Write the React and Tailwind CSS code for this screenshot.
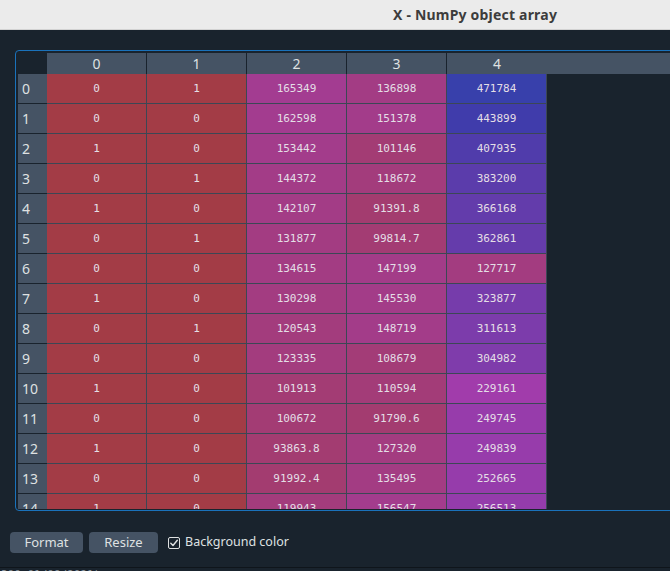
import React from "react";

const rows = [
  ["0", "1", "165349", "136898", "471784"],
  ["0", "0", "162598", "151378", "443899"],
  ["1", "0", "153442", "101146", "407935"],
  ["0", "1", "144372", "118672", "383200"],
  ["1", "0", "142107", "91391.8", "366168"],
  ["0", "1", "131877", "99814.7", "362861"],
  ["0", "0", "134615", "147199", "127717"],
  ["1", "0", "130298", "145530", "323877"],
  ["0", "1", "120543", "148719", "311613"],
  ["0", "0", "123335", "108679", "304982"],
  ["1", "0", "101913", "110594", "229161"],
  ["0", "0", "100672", "91790.6", "249745"],
  ["1", "0", "93863.8", "127320", "249839"],
  ["0", "0", "91992.4", "135495", "252665"],
  ["1", "0", "119943", "156547", "256513"],
];

const VMAX = 471784.1;
const VMIN = 0;

function hsvToRgb(h, s, v) {
  const i = Math.floor(h * 6) % 6;
  const f = h * 6 - Math.floor(h * 6);
  const p = v * (1 - s);
  const q = v * (1 - f * s);
  const t = v * (1 - (1 - f) * s);
  const m = [
    [v, t, p],
    [q, v, p],
    [p, v, t],
    [p, q, v],
    [t, p, v],
    [v, p, q],
  ][i];
  return m.map((x) => x * 255);
}

function cellColor(str) {
  const val = parseFloat(str);
  const hue = 0.66 + 0.33 * (VMAX - val) / (VMAX - VMIN);
  const [r, g, b] = hsvToRgb(hue, 0.7, 1);
  const bg = [25, 35, 45];
  const a = 0.6;
  const mix = (c, k) => Math.round(a * c + (1 - a) * bg[k]);
  return `rgb(${mix(r, 0)}, ${mix(g, 1)}, ${mix(b, 2)})`;
}

export default function App() {
  return (
    <div
      className="w-[670px] h-[571px] overflow-hidden flex flex-col bg-[#19232d]"
      style={{ fontFamily: '"Noto Sans", "Open Sans", sans-serif' }}
    >
      {/* Title bar */}
      <div className="h-[30px] shrink-0 bg-[#ebebeb] border-b border-[#d2d2d2] flex items-center pl-[393px]">
        <span className="text-[14px] font-bold text-[#3c3c3c] leading-none tracking-[0.2px]">
          X - NumPy object array
        </span>
      </div>

      {/* Dialog body */}
      <div className="flex-1 flex flex-col">
        {/* Table frame */}
        <div className="mt-[20px] ml-[15px] w-[720px] border border-[#1a72bb] rounded-l-[4px] pt-[2px] pl-[2px] pb-[1px]">
          {/* Header row */}
          <div className="flex h-[21px]">
            <div className="w-[29px] shrink-0" />
            {["0", "1", "2", "3"].map((h) => (
              <div
                key={h}
                className="w-[100px] shrink-0 bg-[#455364] border-r border-[#19232d] flex items-center justify-center text-[14px] text-[#dfe1e2] leading-none"
              >
                {h}
              </div>
            ))}
            <div className="w-[100px] shrink-0 bg-[#455364] flex items-center justify-center text-[14px] text-[#dfe1e2] leading-none">
              4
            </div>
            <div className="flex-1 bg-[#455364]" />
          </div>

          {/* Body */}
          <div className="h-[435px] overflow-hidden">
            {rows.map((r, i) => (
              <div key={i} className="flex h-[30px]">
                <div className="w-[29px] shrink-0 bg-[#455364] border-b border-[#19232d] flex items-center pl-[4px] text-[14px] text-[#dfe1e2] leading-none">
                  {i}
                </div>
                {r.map((c, j) => (
                  <div
                    key={j}
                    className="w-[100px] shrink-0 border-r border-b border-[#3c4755] flex items-center justify-center text-[11px] text-[#e4dfe6] leading-none"
                    style={{
                      backgroundColor: cellColor(c),
                      fontFamily: '"DejaVu Sans Mono", monospace',
                    }}
                  >
                    {c}
                  </div>
                ))}
              </div>
            ))}
          </div>
        </div>

        {/* Buttons row */}
        <div className="mt-[21px] ml-[10px] flex items-center">
          <button className="h-[21px] w-[73px] bg-[#455364] rounded-[4px] text-[13px] text-[#dfe1e2] leading-none flex items-center justify-center">
            Format
          </button>
          <button className="ml-[6px] h-[21px] w-[69px] bg-[#455364] rounded-[4px] text-[13px] text-[#dfe1e2] leading-none flex items-center justify-center">
            Resize
          </button>
          <div className="ml-[10px] flex items-center">
            <svg width="12" height="12" viewBox="0 0 12 12" className="mt-[1px]">
              <rect x="0.5" y="0.5" width="11" height="11" rx="1.5" fill="none" stroke="#dfe1e2" strokeWidth="1" />
              <path d="M2.8 6.2 L5 8.5 L9.3 3.2" fill="none" stroke="#dfe1e2" strokeWidth="1.4" strokeLinecap="round" strokeLinejoin="round" />
            </svg>
            <span className="ml-[5px] text-[12.5px] text-[#dfe1e2] leading-none">
              Background color
            </span>
          </div>
        </div>
      </div>

      {/* Bottom strip (clipped) */}
      <div className="h-[4px] shrink-0 border-t border-[#0f151b] overflow-hidden bg-[#19232d]">
        <div
          className="text-[11px] leading-[11px] text-[#8a939c] pt-[1px] pl-[1px] whitespace-nowrap"
          style={{ fontFamily: '"DejaVu Sans Mono", monospace' }}
        >
          300 01/09/2021)
        </div>
      </div>
    </div>
  );
}
